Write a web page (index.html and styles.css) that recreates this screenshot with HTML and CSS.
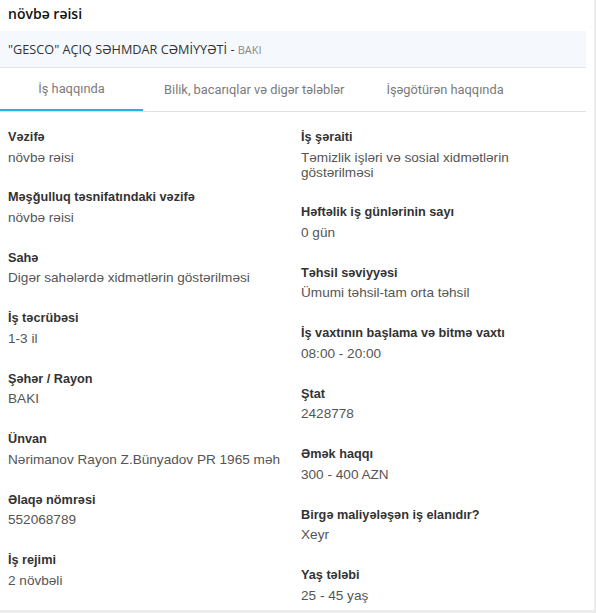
FILE: index.html
```html
<!DOCTYPE html>
<html lang="az">
<head>
<meta charset="utf-8">
<title>növbə rəisi</title>
<link rel="stylesheet" href="styles.css">
</head>
<body>
<div class="card">
  <div class="title">növbə rəisi</div>
  <div class="company">"GESCO" AÇIQ SƏHMDAR CƏMİYYƏTİ - <span class="city">BAKI</span></div>
  <div class="tabs">
    <div class="tab tab-first active">İş haqqında</div>
    <div class="tab">Bilik, bacarıqlar və digər tələblər</div>
    <div class="tab">İşəgötürən haqqında</div>
  </div>
  <div class="details">
    <div class="col">
      <div class="item"><div class="label">Vəzifə</div><div class="value">növbə rəisi</div></div>
      <div class="item"><div class="label">Məşğulluq təsnifatındaki vəzifə</div><div class="value">növbə rəisi</div></div>
      <div class="item"><div class="label">Sahə</div><div class="value">Digər sahələrdə xidmətlərin göstərilməsi</div></div>
      <div class="item"><div class="label">İş təcrübəsi</div><div class="value">1-3 il</div></div>
      <div class="item"><div class="label">Şəhər / Rayon</div><div class="value">BAKI</div></div>
      <div class="item"><div class="label">Ünvan</div><div class="value">Nərimanov Rayon Z.Bünyadov PR 1965 məh</div></div>
      <div class="item"><div class="label">Əlaqə nömrəsi</div><div class="value">552068789</div></div>
      <div class="item"><div class="label">İş rejimi</div><div class="value">2 növbəli</div></div>
    </div>
    <div class="col">
      <div class="item"><div class="label">İş şəraiti</div><div class="value">Təmizlik işləri və sosial xidmətlərin göstərilməsi</div></div>
      <div class="item"><div class="label">Həftəlik iş günlərinin sayı</div><div class="value">0 gün</div></div>
      <div class="item"><div class="label">Təhsil səviyyəsi</div><div class="value">Ümumi təhsil-tam orta təhsil</div></div>
      <div class="item"><div class="label">İş vaxtının başlama və bitmə vaxtı</div><div class="value">08:00 - 20:00</div></div>
      <div class="item"><div class="label">Ştat</div><div class="value">2428778</div></div>
      <div class="item"><div class="label">Əmək haqqı</div><div class="value">300 - 400 AZN</div></div>
      <div class="item"><div class="label">Birgə maliyələşən iş elanıdır?</div><div class="value">Xeyr</div></div>
      <div class="item"><div class="label">Yaş tələbi</div><div class="value">25 - 45 yaş</div></div>
    </div>
  </div>
</div>
</body>
</html>
```

FILE: styles.css
```css
html, body {
  margin: 0;
  padding: 0;
  background: #ececec;
}

.card {
  width: 594px;
  height: 610px;
  box-sizing: border-box;
  padding-right: 8px;
  background: #fff;
  overflow: hidden;
}

.title {
  height: 31px;
  line-height: 28px;
  padding-left: 8px;
  font-family: "Open Sans", "Noto Sans", sans-serif;
  font-weight: 600;
  font-size: 14px;
  color: #111;
}

.company {
  height: 36px;
  line-height: 36px;
  padding-left: 8px;
  background: #f5f9fd;
  border-bottom: 1px solid #e1e4e8;
  font-family: "Open Sans", "Noto Sans", sans-serif;
  font-size: 12.7px;
  color: #333;
}

.city {
  font-size: 11px;
  color: #888;
}

.tabs {
  display: flex;
  height: 44px;
  box-sizing: border-box;
  border-bottom: 1px solid #e0e0e0;
}

.tab {
  height: 43px;
  box-sizing: border-box;
  padding: 0 21px;
  line-height: 43px;
  font-family: Roboto, "Noto Sans", sans-serif;
  font-size: 12.85px;
  color: #7a7a7a;
  white-space: nowrap;
}

.tab-first {
  width: 143px;
  padding: 0;
  text-align: center;
}

.tab.active {
  border-bottom: 2px solid #22b4e2;
  line-height: 41px;
}

.details {
  display: grid;
  grid-template-columns: 285px 270px;
  column-gap: 8px;
  padding: 15px 8px 0;
  font-family: "Liberation Sans", Roboto, sans-serif;
}

.item {
  margin-bottom: 22.95px;
}

.label {
  font-size: 12.7px;
  font-weight: bold;
  line-height: 20px;
  color: #333;
}

.value {
  margin-top: 2.5px;
  font-size: 13.6px;
  line-height: 15px;
  color: #555;
}
```
